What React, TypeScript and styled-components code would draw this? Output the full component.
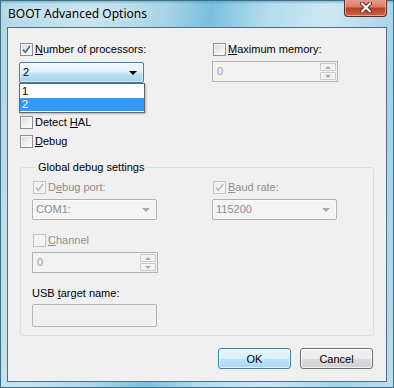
import styled, { createGlobalStyle } from 'styled-components';

const GlobalStyle = createGlobalStyle`
  html, body {
    margin: 0;
    padding: 0;
  }
  body {
    width: 394px;
    height: 388px;
    overflow: hidden;
    font-family: "Liberation Sans", Arial, sans-serif;
    font-size: 11px;
    color: #000;
  }
  * {
    box-sizing: border-box;
  }
`;

type CheckProps = { checked?: boolean; disabled?: boolean };

const Check = ({ checked, disabled }: CheckProps) => (
  <CheckBox $disabled={disabled}>
    {checked && (
      <svg width="9" height="9" viewBox="0 0 9 9">
        <path
          d="M1 4.6 L3.4 7.3 L8 1"
          fill="none"
          stroke={disabled ? '#b9b9b9' : '#4a63a8'}
          strokeWidth="1.6"
        />
      </svg>
    )}
  </CheckBox>
);

const App = () => {
  return (
    <Window>
      <GlobalStyle />
      <TitleBar>
        <Title>BOOT Advanced Options</Title>
        <CloseButton>
          <svg width="14" height="11" viewBox="0 0 14 11">
            <path
              d="M3 1.5 L11 9.5 M11 1.5 L3 9.5"
              stroke="#5a2a22"
              strokeWidth="4"
              strokeLinecap="round"
            />
            <path
              d="M3 1.5 L11 9.5 M11 1.5 L3 9.5"
              stroke="#ffffff"
              strokeWidth="2.2"
              strokeLinecap="round"
            />
          </svg>
        </CloseButton>
      </TitleBar>
      <Client>
        <Columns>
          <Column>
            <CheckRow>
              <Check checked />
              <Label>
                <Key>N</Key>umber of processors:
              </Label>
            </CheckRow>
            <ComboWrap>
              <Combo $state="open">
                <ComboValue>2</ComboValue>
                <Arrow />
              </Combo>
              <DropList>
                <DropItem>1</DropItem>
                <DropItem $selected>2</DropItem>
              </DropList>
            </ComboWrap>
            <CheckRow $top={32}>
              <Check />
              <Label>
                Detect <Key>H</Key>AL
              </Label>
            </CheckRow>
            <CheckRow $top={4}>
              <Check />
              <Label>
                <Key>D</Key>ebug
              </Label>
            </CheckRow>
          </Column>
          <Column>
            <CheckRow>
              <Check />
              <Label>
                <Key>M</Key>aximum memory:
              </Label>
            </CheckRow>
            <Spinner $top={4}>
              <SpinValue>0</SpinValue>
              <SpinButtons>
                <SpinButton>
                  <SpinArrow $up />
                </SpinButton>
                <SpinButton>
                  <SpinArrow />
                </SpinButton>
              </SpinButtons>
            </Spinner>
          </Column>
        </Columns>

        <Group>
          <Legend>Global debug settings</Legend>
          <GroupColumns>
            <Column>
              <CheckRow>
                <Check checked disabled />
                <Label $disabled>
                  D<Key>e</Key>bug port:
                </Label>
              </CheckRow>
              <Combo $state="disabled">
                <ComboValue $disabled>COM1:</ComboValue>
                <Arrow $disabled />
              </Combo>
              <CheckRow $top={13}>
                <Check disabled />
                <Label $disabled>
                  <Key>C</Key>hannel
                </Label>
              </CheckRow>
              <Spinner $top={4}>
                <SpinValue>0</SpinValue>
                <SpinButtons>
                  <SpinButton>
                    <SpinArrow $up />
                  </SpinButton>
                  <SpinButton>
                    <SpinArrow />
                  </SpinButton>
                </SpinButtons>
              </Spinner>
              <FieldLabel>
                USB <Key>t</Key>arget name:
              </FieldLabel>
              <TextBox />
            </Column>
            <Column>
              <CheckRow>
                <Check checked disabled />
                <Label $disabled>
                  <Key>B</Key>aud rate:
                </Label>
              </CheckRow>
              <Combo $state="disabled">
                <ComboValue $disabled>115200</ComboValue>
                <Arrow $disabled />
              </Combo>
            </Column>
          </GroupColumns>
        </Group>

        <ButtonRow>
          <Button $default>OK</Button>
          <Button>Cancel</Button>
        </ButtonRow>
      </Client>
    </Window>
  );
};

export default App;

const Window = styled.div`
  width: 394px;
  height: 388px;
  display: flex;
  flex-direction: column;
  padding: 0 7px 6px 7px;
  background:
    linear-gradient(to bottom, rgba(40, 120, 150, 0.5) 0px, rgba(40, 120, 150, 0) 4px),
    linear-gradient(
      100deg,
      #b3d8e8 0%,
      #c8e4ef 20%,
      #a9d4e7 36%,
      #79c0de 46%,
      #b2dcee 58%,
      #cde8f3 72%,
      #a3d2e8 88%,
      #bcdeec 100%
    );
  box-shadow: inset 0 0 0 1px #3f6f86;
`;

const TitleBar = styled.div`
  height: 27px;
  display: flex;
  justify-content: space-between;
  align-items: flex-start;
  flex-shrink: 0;
`;

const Title = styled.div`
  padding: 6px 0 0 1px;
  font-family: "Noto Sans", "Open Sans", sans-serif;
  font-size: 12px;
  line-height: 16px;
  color: #000;
  text-shadow: 0 0 6px rgba(255, 255, 255, 0.9);
`;

const CloseButton = styled.div`
  width: 43px;
  height: 18px;
  margin-top: -1px;
  display: flex;
  align-items: center;
  justify-content: center;
  border: 1px solid #5b2a24;
  border-top: none;
  border-radius: 0 0 4px 4px;
  background: linear-gradient(
    to bottom,
    #e6a08e 0%,
    #d77e69 45%,
    #bd3e25 55%,
    #cc6446 100%
  );
  box-shadow: inset 0 0 0 1px rgba(255, 220, 210, 0.55);
`;

const Client = styled.div`
  flex: 1;
  display: flex;
  flex-direction: column;
  background: #f0f0f0;
  border: 1px solid #4f6f86;
  padding: 14px 12px 0 11px;
`;

const Columns = styled.div`
  display: grid;
  grid-template-columns: 193px 1fr;
`;

const GroupColumns = styled.div`
  display: grid;
  grid-template-columns: 180px 1fr;
`;

const Column = styled.div`
  display: flex;
  flex-direction: column;
  align-items: flex-start;
`;

const CheckRow = styled.div<{ $top?: number }>`
  height: 15px;
  display: flex;
  align-items: center;
  gap: 2px;
  margin-top: ${({ $top }) => $top ?? 0}px;
  padding-left: 1px;
`;

const CheckBox = styled.span<{ $disabled?: boolean }>`
  width: 13px;
  height: 13px;
  display: flex;
  align-items: center;
  justify-content: center;
  border: 1px solid ${({ $disabled }) => ($disabled ? '#c2c2c2' : '#8e8f8f')};
  background: ${({ $disabled }) =>
    $disabled
      ? '#f4f4f4'
      : 'linear-gradient(135deg, #d8dadd 0%, #f0f0f1 60%, #fbfbfb 100%)'};
  box-shadow: inset 0 0 0 1px #f6f6f6;
`;

const Label = styled.span<{ $disabled?: boolean }>`
  line-height: 15px;
  white-space: nowrap;
  color: ${({ $disabled }) => ($disabled ? '#8d8d8d' : '#000')};
`;

const Key = styled.u`
  text-decoration: underline;
  text-underline-offset: 1px;
`;

const ComboWrap = styled.div`
  position: relative;
  margin-top: 5px;
`;

const Combo = styled.div<{ $state: 'open' | 'disabled' }>`
  width: 125px;
  height: 21px;
  display: flex;
  align-items: center;
  padding: 0 5px 0 3px;
  margin-top: ${({ $state }) => ($state === 'disabled' ? 4 : 0)}px;
  border-radius: 2px;
  border: 1px solid ${({ $state }) => ($state === 'open' ? '#3c7fb1' : '#adb2b5')};
  background: ${({ $state }) =>
    $state === 'open'
      ? 'linear-gradient(to bottom, #f2f9fd 0%, #dff1fb 45%, #c2e4f6 55%, #9ad2ee 100%)'
      : '#f4f4f4'};
  box-shadow: ${({ $state }) =>
    $state === 'open' ? 'inset 0 0 0 1px rgba(255,255,255,0.5)' : 'inset 0 0 0 1px #fbfbfb'};
`;

const ComboValue = styled.span<{ $disabled?: boolean }>`
  flex: 1;
  line-height: 15px;
  color: ${({ $disabled }) => ($disabled ? '#8d8d8d' : '#000')};
`;

const Arrow = styled.span<{ $disabled?: boolean }>`
  width: 0;
  height: 0;
  border-left: 4px solid transparent;
  border-right: 4px solid transparent;
  border-top: 4px solid ${({ $disabled }) => ($disabled ? '#a8a8a8' : '#000')};
  margin-right: 1px;
`;

const DropList = styled.div`
  position: absolute;
  top: 21px;
  left: 0;
  width: 126px;
  padding: 1px 0;
  background: #fff;
  border: 1px solid #646464;
  box-shadow: 1px 1px 2px rgba(0, 0, 0, 0.25);
  z-index: 2;
`;

const DropItem = styled.div<{ $selected?: boolean }>`
  height: 13px;
  line-height: 13px;
  padding-left: 2px;
  background: ${({ $selected }) => ($selected ? '#3399ff' : 'transparent')};
  color: ${({ $selected }) => ($selected ? '#fff' : '#000')};
`;

const Spinner = styled.div<{ $top?: number }>`
  width: 126px;
  height: 21px;
  display: flex;
  align-items: stretch;
  margin-top: ${({ $top }) => $top ?? 0}px;
  border: 1px solid #b3b3b3;
  background: #f2f2f2;
  padding: 1px 1px 1px 4px;
`;

const SpinValue = styled.span`
  flex: 1;
  align-self: center;
  line-height: 15px;
  color: #9d9dab;
`;

const SpinButtons = styled.div`
  width: 16px;
  display: flex;
  flex-direction: column;
  gap: 1px;
`;

const SpinButton = styled.div`
  flex: 1;
  display: flex;
  align-items: center;
  justify-content: center;
  border: 1px solid #cacaca;
  border-radius: 1px;
  background: #f4f4f4;
`;

const SpinArrow = styled.span<{ $up?: boolean }>`
  width: 0;
  height: 0;
  border-left: 3px solid transparent;
  border-right: 3px solid transparent;
  ${({ $up }) => ($up ? 'border-bottom' : 'border-top')}: 3px solid #a6a6a6;
`;

const Group = styled.fieldset`
  margin: 11px 0 0 1px;
  padding: 6px 0 8px 11px;
  border: 1px solid #d5dfe5;
  border-radius: 3px;
  min-width: 0;
`;

const Legend = styled.legend`
  margin-left: 4px;
  padding: 0 2px;
  line-height: 14px;
  color: #000;
`;

const FieldLabel = styled.div`
  margin-top: 13px;
  line-height: 14px;
  color: #000;
`;

const TextBox = styled.div`
  width: 125px;
  height: 23px;
  margin-top: 4px;
  border: 1px solid #b5b5b5;
  border-radius: 2px;
  background: #f0f0f0;
`;

const ButtonRow = styled.div`
  display: flex;
  justify-content: flex-end;
  gap: 9px;
  margin-top: 12px;
  padding-right: 1px;
`;

const Button = styled.div<{ $default?: boolean }>`
  width: 73px;
  height: 21px;
  display: flex;
  align-items: center;
  justify-content: center;
  border-radius: 3px;
  border: 1px solid ${({ $default }) => ($default ? '#3c7fb1' : '#707070')};
  background: ${({ $default }) =>
    $default
      ? 'linear-gradient(to bottom, #eaf6fd 0%, #d9f0fc 50%, #bee6fd 50%, #a7d9f5 100%)'
      : 'linear-gradient(to bottom, #f2f2f2 0%, #ebebeb 50%, #dddddd 50%, #cfcfcf 100%)'};
  box-shadow: inset 0 0 0 1px rgba(255, 255, 255, 0.7);
  color: #000;
`;
